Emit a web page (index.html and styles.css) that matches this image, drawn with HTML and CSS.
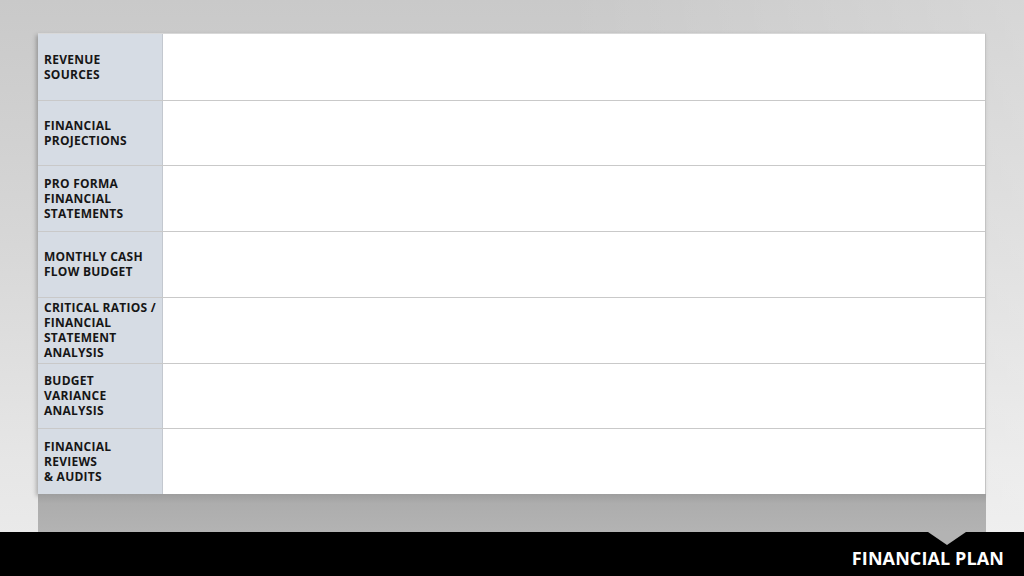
FILE: index.html
```html
<!DOCTYPE html>
<html>
<head>
<meta charset="utf-8">
<link rel="stylesheet" href="styles.css">
</head>
<body>
<div class="stage">
  <div class="main">
    <div class="sheet">
      <div class="row"><div class="label">REVENUE<br>SOURCES</div><div class="cell"></div></div>
      <div class="row"><div class="label">FINANCIAL<br>PROJECTIONS</div><div class="cell"></div></div>
      <div class="row"><div class="label">PRO FORMA<br>FINANCIAL<br>STATEMENTS</div><div class="cell"></div></div>
      <div class="row"><div class="label">MONTHLY CASH<br>FLOW BUDGET</div><div class="cell"></div></div>
      <div class="row"><div class="label">CRITICAL RATIOS /<br>FINANCIAL<br>STATEMENT<br>ANALYSIS</div><div class="cell"></div></div>
      <div class="row"><div class="label">BUDGET<br>VARIANCE<br>ANALYSIS</div><div class="cell"></div></div>
      <div class="row"><div class="label">FINANCIAL<br>REVIEWS<br>&amp; AUDITS</div><div class="cell"></div></div>
    </div>
    <div class="shade"></div>
  </div>
  <div class="footer">
    <span class="notch"></span>
    <span class="title">FINANCIAL PLAN</span>
  </div>
</div>
</body>
</html>
```
FILE: styles.css
```css
html, body {
  margin: 0;
  padding: 0;
}
body {
  width: 1024px;
  height: 576px;
  overflow: hidden;
  font-family: "Open Sans", "Liberation Sans", sans-serif;
}
.stage {
  width: 1024px;
  height: 576px;
  display: flex;
  flex-direction: column;
  background:
    linear-gradient(90deg, rgba(255,255,255,0) 0%, rgba(255,255,255,0) 55%, rgba(255,255,255,0.25) 100%),
    linear-gradient(180deg, #c9c9c9 0%, #d6d6d6 40%, #e6e6e6 80%, #ececec 100%);
}
.main {
  flex: 1;
  padding: 33px 38px 0 38px;
  display: flex;
  flex-direction: column;
}
.sheet {
  height: 461px;
  display: grid;
  grid-template-rows: repeat(7, minmax(0, 1fr));
  background: #ffffff;
  box-shadow: -2px 2px 4px rgba(0,0,0,0.25);
  border-right: 1px solid #c4c4c4;
  border-top: 1px solid #d8d8d8;
  box-sizing: border-box;
}
.row {
  display: grid;
  grid-template-columns: 125px 1fr;
  border-top: 1px solid #c9c9c9;
}
.row:first-child {
  border-top: none;
}
.label {
  background: #d6dce4;
  border-right: 1px solid #c3c8cf;
  padding: 0 6px;
  display: flex;
  align-items: center;
  font-size: 12px;
  line-height: 15px;
  font-weight: bold;
  color: #161616;
  white-space: nowrap;
  letter-spacing: 0.25px;
}
.cell {
  background: #ffffff;
}
.shade {
  flex: 1;
  background: linear-gradient(180deg, #9e9e9e 0%, #adadad 25%, #b3b3b3 100%);
}
.footer {
  position: relative;
  height: 44px;
  background: #000000;
  display: flex;
  justify-content: flex-end;
  align-items: center;
  padding: 8px 20px 0 0;
  box-sizing: border-box;
}
.notch {
  position: absolute;
  left: 928px;
  top: 0;
  width: 0;
  height: 0;
  border-left: 19px solid transparent;
  border-right: 19px solid transparent;
  border-top: 13px solid #b3b3b3;
}
.title {
  color: #ffffff;
  font-weight: bold;
  font-size: 18px;
  letter-spacing: 0.1px;
}
```
